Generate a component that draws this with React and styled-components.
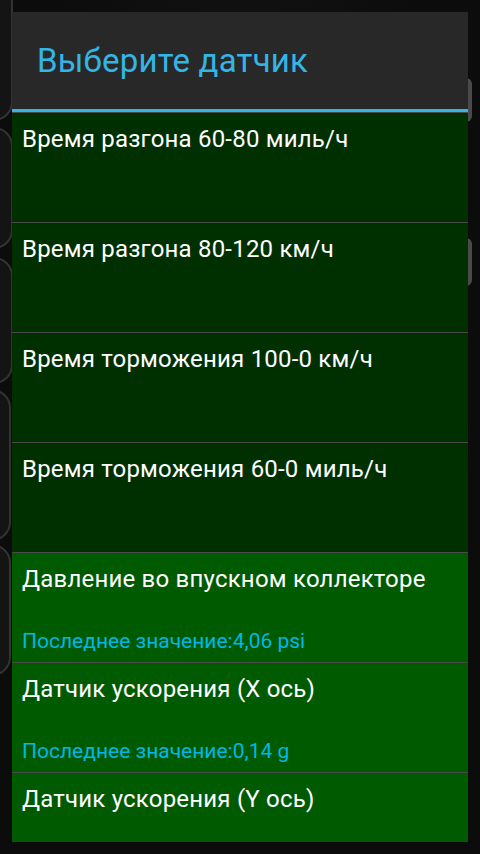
import styled, { createGlobalStyle } from 'styled-components';

const GlobalStyle = createGlobalStyle`
  html, body {
    margin: 0;
    padding: 0;
    background: #0b0b0b;
  }
  body {
    font-family: Roboto, 'Noto Sans', 'DejaVu Sans', sans-serif;
  }
`;

const sensors = [
  { title: 'Время разгона 60-80 миль/ч', active: false },
  { title: 'Время разгона 80-120 км/ч', active: false },
  { title: 'Время торможения 100-0 км/ч', active: false },
  { title: 'Время торможения 60-0 миль/ч', active: false },
  { title: 'Давление во впускном коллекторе', value: '4,06 psi', active: true },
  { title: 'Датчик ускорения (X ось)', value: '0,14 g', active: true },
  { title: 'Датчик ускорения (Y ось)', active: true, last: true },
];

const Screen = styled.div`
  position: relative;
  width: 480px;
  height: 854px;
  overflow: hidden;
  box-sizing: border-box;
  padding: 12px;
  background: radial-gradient(ellipse at 50% 40%, #181818 0%, #0c0c0c 70%);
`;

// dashboard buttons peeking out behind the dialog
const Backdrop = styled.svg`
  position: absolute;
  left: 0;
  top: 0;
  width: 480px;
  height: 854px;
`;

const Dialog = styled.div`
  position: relative;
  display: flex;
  flex-direction: column;
  height: 830px;
  background: #282828;
  overflow: hidden;
`;

const TitleBar = styled.div`
  height: 100px;
  flex-shrink: 0;
  display: flex;
  align-items: center;
  padding: 0 0 0 25px;
  box-sizing: border-box;
  border-bottom: 3px solid #33b5e5;
`;

const Title = styled.h1`
  margin: 0;
  font-weight: 400;
  font-size: 33px;
  color: #33b5e5;
  letter-spacing: 0.2px;
`;

const List = styled.div`
  flex: 1;
  display: flex;
  flex-direction: column;
  border-top: 1px solid #4a4a4a;
`;

const Row = styled.div`
  height: ${(p) => (p.$last ? '69px' : '110px')};
  flex-shrink: 0;
  box-sizing: border-box;
  padding: 12px 10px 0 10px;
  display: flex;
  flex-direction: column;
  justify-content: space-between;
  background: ${(p) => (p.$active ? '#005a00' : '#003000')};
  border-bottom: ${(p) => (p.$last ? 'none' : '1px solid #4a4a4a')};
`;

const RowTitle = styled.div`
  font-size: 24px;
  color: #ffffff;
  line-height: 28px;
  letter-spacing: 0.2px;
`;

const RowValue = styled.div`
  font-size: 21px;
  color: #00b6ea;
  line-height: 24px;
  padding-bottom: 9px;
`;

const App = () => {
  return (
    <>
      <GlobalStyle />
      <Screen>
        <Backdrop viewBox="0 0 480 854">
          <g fill="#141414" stroke="#333" strokeWidth="2">
            <rect x="-60" y="-20" width="72" height="140" rx="18" />
            <rect x="-60" y="128" width="72" height="120" rx="18" />
            <rect x="-60" y="258" width="72" height="125" rx="18" />
            <rect x="-60" y="390" width="70" height="150" rx="18" />
            <rect x="-60" y="545" width="70" height="130" rx="18" />
            <rect x="460" y="78" width="12" height="44" rx="6" fill="#4a4a4a" stroke="none" />
            <rect x="460" y="238" width="12" height="48" rx="6" fill="#4a4a4a" stroke="none" />
          </g>
        </Backdrop>
        <Dialog>
          <TitleBar>
            <Title>Выберите датчик</Title>
          </TitleBar>
          <List>
            {sensors.map((s) => (
              <Row key={s.title} $active={s.active} $last={s.last}>
                <RowTitle>{s.title}</RowTitle>
                {s.value && <RowValue>Последнее значение:{s.value}</RowValue>}
              </Row>
            ))}
          </List>
        </Dialog>
      </Screen>
    </>
  );
};

export default App;
